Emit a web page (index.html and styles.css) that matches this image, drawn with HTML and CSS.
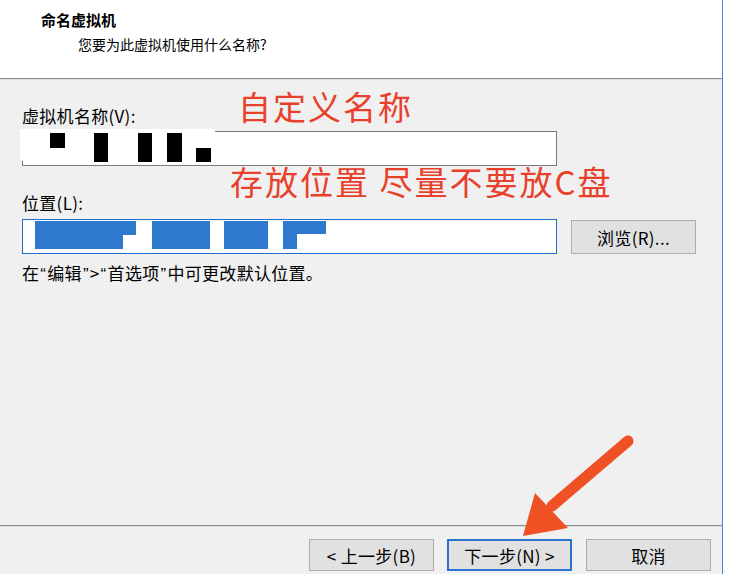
FILE: index.html
```
<html>
<head>
    <title>新建虚拟机向导</title>
    <link rel="stylesheet" href="styles.css">
</head>
<body>
<div class="dialog">
    <div class="header">
        <div class="title">命名虚拟机</div>
        <div class="subtitle">您要为此虚拟机使用什么名称?</div>
    </div>

    <div class="content">
        <div class="label">虚拟机名称(V):</div>
        <div class="textbox name-box">
            <div class="mask">
                <span class="blk b1"></span>
                <span class="blk b2"></span>
                <span class="blk b3"></span>
                <span class="blk b4"></span>
                <span class="blk b5"></span>
            </div>
        </div>

        <div class="label loc-label">位置(L):</div>
        <div class="loc-row">
            <div class="textbox focused">
                <span class="blue l1"></span>
                <span class="blue l1b"></span>
                <span class="blue l2"></span>
                <span class="blue l3"></span>
                <span class="blue l4"></span>
                <span class="blue l4b"></span>
                <span class="blue l4c"></span>
            </div>
            <button class="btn">浏览(R)...</button>
        </div>
        <div class="hint">在<span class="q">“</span>编辑<span class="q">”</span>&gt;<span class="q">“</span>首选项<span class="q">”</span>中可更改默认位置。</div>
    </div>

    <div class="footer">
        <button class="btn">&lt; 上一步(B)</button>
        <button class="btn default">下一步(N) &gt;</button>
        <button class="btn cancel">取消</button>
    </div>

    <!-- annotations drawn on top of the screenshot -->
    <div class="note note-name">自定义名称</div>
    <div class="note note-loc">存放位置 尽量不要放C盘</div>
    <svg class="arrow" width="160" height="130" viewBox="500 420 160 130">
        <line x1="628" y1="441" x2="552" y2="506" stroke="#ef5024" stroke-width="11" stroke-linecap="round"/>
        <polygon points="523,536 535,493 568,528" fill="#ef5024"/>
    </svg>
</div>
</body>
</html>
```

FILE: styles.css
```
body {
    margin: 0;
    background: #fff;
    font-family: "Noto Sans CJK SC", "Microsoft YaHei", sans-serif;
    color: #000;
}
.dialog {
    position: relative;
    width: 722px;
    height: 574px;
    background: #f0f0f0;
    border-right: 1px solid #3d8ddf;
    display: flex;
    flex-direction: column;
    overflow: hidden;
}
.header {
    height: 79px;
    background: #fff;
    border-bottom: 1px solid #8c8c8c;
    box-shadow: 0 1px 0 #dedede;
    padding: 9px 0 0 41px;
    box-sizing: border-box;
}
.title {
    font-size: 15px;
    font-weight: bold;
    line-height: 22px;
}
.subtitle {
    font-size: 14px;
    line-height: 22px;
    margin-left: 37px;
    margin-top: 2px;
}
.content {
    flex: 1;
    padding: 26px 0 0 22px;
}
.label {
    font-size: 17px;
    line-height: 21px;
    letter-spacing: 0.3px;
}
.loc-label {
    margin-top: 26px;
}
.textbox {
    position: relative;
    width: 535px;
    height: 35px;
    box-sizing: border-box;
    background: #fff;
    border: 1px solid #7a7a7a;
}
.name-box {
    margin-top: 5px;
}
.focused {
    border-color: #1f6fd0;
}
.mask {
    position: absolute;
    left: -3px;
    top: -3px;
    width: 195px;
    height: 33px;
    background: #fff;
    border-radius: 0 0 12px 6px;
}
.blk {
    position: absolute;
    background: #000;
}
.b1 { left: 30px; top: 4px; width: 15px; height: 15px; }
.b2 { left: 74px; top: 4px; width: 14px; height: 29px; }
.b3 { left: 118px; top: 4px; width: 14px; height: 29px; }
.b4 { left: 147px; top: 4px; width: 15px; height: 29px; }
.b5 { left: 176px; top: 19px; width: 15px; height: 14px; }
.blue {
    position: absolute;
    background: #2e78cd;
    top: 1px;
    height: 28px;
}
.l1 { left: 12px; width: 88px; }
.l1b { left: 99px; width: 14px; height: 14px; }
.l2 { left: 129px; width: 58px; }
.l3 { left: 201px; width: 44px; }
.l4 { left: 260px; width: 14px; }
.l4b { left: 274px; width: 15px; height: 13px; }
.l4c { left: 289px; width: 14px; height: 13px; }
.loc-row {
    display: flex;
    gap: 14px;
    margin-top: 6px;
    align-items: flex-start;
}
.btn {
    width: 125px;
    height: 34px;
    margin-top: 1px;
    background: #e1e1e1;
    border: 1px solid #adadad;
    font-family: inherit;
    font-size: 17px;
    letter-spacing: 0.3px;
    color: #000;
    padding: 0;
}
.hint {
    font-size: 17px;
    line-height: 21px;
    letter-spacing: 0.3px;
    margin-top: 8px;
}
.q {
    font-family: "Liberation Sans", sans-serif;
    padding: 0 1px;
}
.footer {
    height: 49px;
    border-top: 1px solid #8c8c8c;
    box-shadow: inset 0 1px 0 #dedede;
    display: flex;
    justify-content: flex-end;
    gap: 13px;
    padding: 13px 11px 0 0;
    box-sizing: border-box;
}
.footer .btn {
    height: 32px;
    margin-top: 0;
}
.footer .default {
    border: 2px solid #2a74d0;
}
.footer .cancel {
    margin-left: 1px;
}
.note {
    position: absolute;
    color: #e8402b;
    font-size: 33px;
    line-height: 36px;
    letter-spacing: 2px;
}
.note-name {
    left: 238px;
    top: 88px;
}
.note-loc {
    left: 230px;
    top: 163px;
}
.arrow {
    position: absolute;
    left: 500px;
    top: 420px;
}
```
